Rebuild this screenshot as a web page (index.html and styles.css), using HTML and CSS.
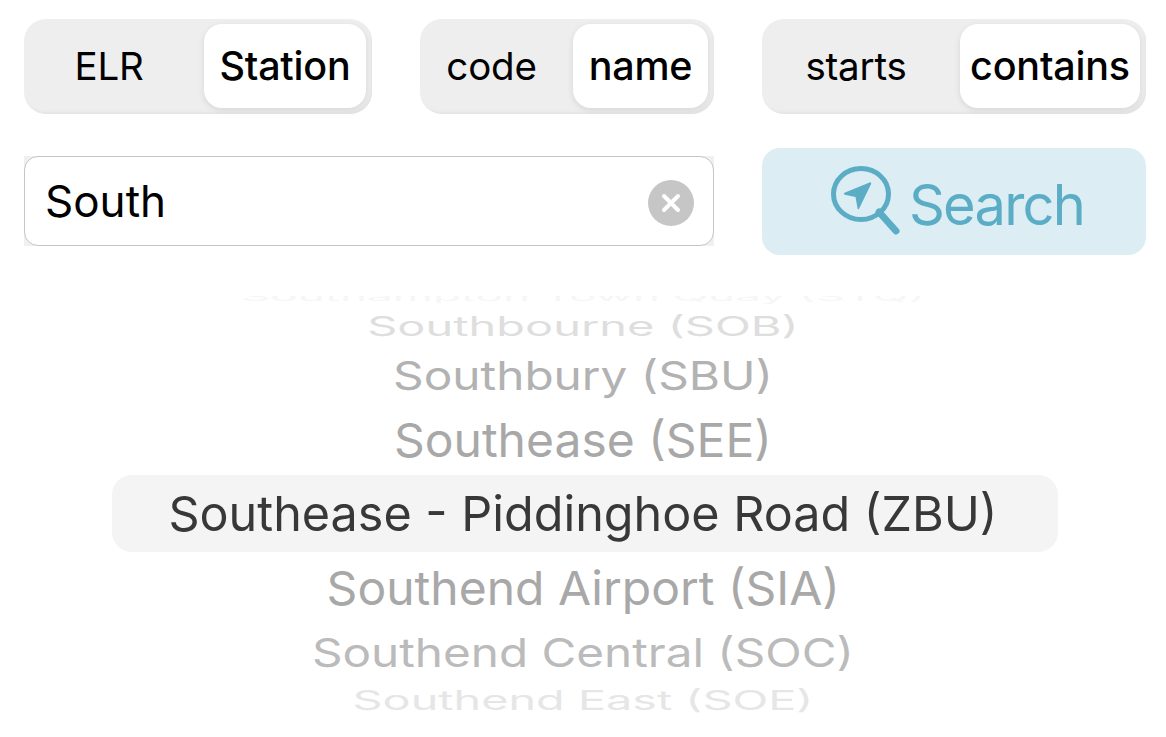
FILE: index.html
```html
<!DOCTYPE html>
<html lang="en">
<head>
<meta charset="utf-8">
<title>Station search</title>
<link rel="stylesheet" href="styles.css">
</head>
<body>
<main class="app">
  <div class="controls">
    <div class="seg seg-a"><span class="opt">ELR</span><span class="opt on">Station</span></div>
    <div class="seg seg-b"><span class="opt">code</span><span class="opt on">name</span></div>
    <div class="seg seg-c"><span class="opt">starts</span><span class="opt on">contains</span></div>
  </div>
  <div class="search-row">
    <div class="field-wrap">
      <div class="field">
        <span class="field-text">South</span>
        <svg class="clear" viewBox="0 0 46 46" aria-hidden="true"><circle cx="23" cy="23" r="23" fill="#c6c6c6"/><path d="M16 16 30 30M30 16 16 30" stroke="#fff" stroke-width="4" stroke-linecap="round"/></svg>
      </div>
    </div>
    <button class="go">
      <svg class="go-icon" viewBox="0 0 72 72" aria-hidden="true"><ellipse cx="31" cy="28" rx="27.500" ry="25.500" fill="none" stroke="#5badc6" stroke-width="5"/><path d="M49 46 66 65" stroke="#5badc6" stroke-width="7" stroke-linecap="round"/><path d="M14.500 26.800 39.500 16.500c1.200-.5 2 .4 1.600 1.500L29.200 42.500c-.5 1-1.600.8-1.700-.3L25.500 31 14.800 28.800c-1.100-.2-1.300-1.500-.3-2Z" fill="#5badc6"/></svg>
      <span class="go-label">Search</span>
    </button>
  </div>
  <div class="wheel">
    <div class="row r0"><span>Southampton Town Quay (STQ)</span></div>
    <div class="row r1"><span>Southbourne (SOB)</span></div>
    <div class="row r2"><span>Southbury (SBU)</span></div>
    <div class="row r3"><span>Southease (SEE)</span></div>
    <div class="row sel"><span>Southease - Piddinghoe Road (ZBU)</span></div>
    <div class="row r4"><span>Southend Airport (SIA)</span></div>
    <div class="row r5"><span>Southend Central (SOC)</span></div>
    <div class="row r6"><span>Southend East (SOE)</span></div>
  </div>
</main>
</body>
</html>
```
FILE: styles.css
```css
* { box-sizing: border-box; }
html, body { margin: 0; height: 100%; background: #fff; overflow: hidden; }
body { font-family: Inter, "Liberation Sans", sans-serif; color: #000; }
.app { padding: 19px 20px 0 24px; }
.controls { display: flex; gap: 48px; }
.seg {
  display: flex; height: 95px; padding: 5px 6px 6px 0;
  background: #eee; border-radius: 22px;
  box-shadow: inset -2px -3px 3px -1px #e4e4e4;
}
.seg-a { width: 348px; }
.seg-b { width: 294px; }
.seg-c { width: 384px; }
.opt {
  display: flex; align-items: center; justify-content: center;
  flex: 1; padding-right: 10px; font-size: 38.500px; font-weight: 400; letter-spacing: -0.2px;
}
.opt.on {
  flex: none; padding-right: 0; background: #fff; border-radius: 18px;
  font-size: 39.500px; font-weight: 500;
  box-shadow: 0 2px 6px rgba(0,0,0,.1);
}
.seg-a .on { width: 162px; }
.seg-b .on { width: 135px; }
.seg-c .on { width: 180px; }
.search-row { display: flex; gap: 48px; margin-top: 34px; align-items: flex-start; }
.field-wrap { width: 690px; height: 90px; margin-top: 8px; background: #f0f0f0; }
.field {
  display: flex; align-items: center; justify-content: space-between;
  height: 100%; padding: 0 19px 0 20px;
  border: 1px solid #c5c5c5; border-radius: 14px; background: #fff;
  font-size: 44px;
}
.clear { width: 46px; height: 46px; margin-top: 3px; }
.go {
  display: flex; align-items: center; justify-content: center; gap: 7px;
  width: 384px; height: 107px; padding: 0 0 0 6px; border: 0; border-radius: 18px;
  background: #dceef4; color: #5badc6; font: 400 56px Inter, "Liberation Sans", sans-serif;
  letter-spacing: -1.800px;
}
.go-icon { width: 72px; height: 72px; }
.go-label { padding-top: 6px; }
.wheel {
  display: flex; flex-direction: column; align-items: center;
  height: 426px; margin: 41px 0 0 -4px; overflow: hidden;
}
.row { display: flex; align-items: center; justify-content: center; width: 946px; flex: none; white-space: nowrap; font-size: 48.500px; }
.row span { display: block; }
.r0 { height: 9px; color: #f6f6f6; }
.r1 { height: 42px; color: #dedede; }
.r2 { height: 58px; color: #b2b2b2; }
.r3 { height: 70px; color: #a8a8a8; }
.sel { height: 77px; margin-left: 4px; padding-right: 4px; color: #383838; background: #f4f4f4; border-radius: 20px; }
.r4 { height: 72px; color: #a8a8a8; }
.r5 { height: 58px; color: #bbb; }
.r6 { height: 38px; color: #e6e6e6; }
.r0 span { transform: scale(.945, .25) translateY(-16px); }
.r1 span { transform: scale(.968, .55); }
.r2 span { transform: scale(.984, .82) translateY(-1px); }
.r3 span { transform: scale(.99, .97); }
.r4 span { transform: scale(.99, .97); }
.r5 span { transform: scale(.982, .82) translateY(-1px); }
.r6 span { transform: scale(.964, .55) translateY(-2px); }
```
